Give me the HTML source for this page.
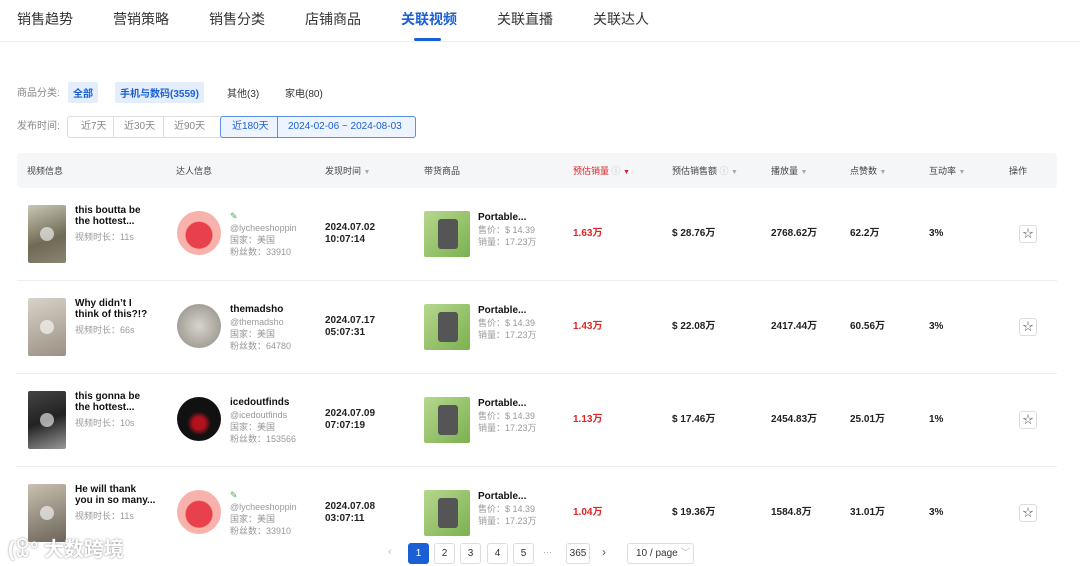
<!DOCTYPE html>
<html><head><meta charset="utf-8"><style>
*{margin:0;padding:0;box-sizing:border-box}
body{width:1080px;height:566px;overflow:hidden;background:#fff;font-family:"Liberation Sans","Noto Sans CJK SC",sans-serif;color:#222;position:relative}
.a{position:absolute;white-space:nowrap}
.tab{font-size:14px;color:#333;top:9px}
.g{color:#888}
.b{font-weight:bold}
.hd{font-size:9px;color:#444;top:165px;line-height:12px}
.tri{font-size:7px;color:#aaa}
.row{position:absolute;left:17px;width:1040px;height:93px;border-bottom:1px solid #eee}
.thumb{position:absolute;left:11px;width:38px;height:58px;border-radius:2px;background:linear-gradient(160deg,#c9c7b5,#6e6a55 60%,#8a8570)}
.ply{position:absolute;left:12px;top:22px;width:14px;height:14px;border-radius:50%;background:rgba(255,255,255,.6)}
.t1{position:absolute;left:58px;font-size:10px;font-weight:bold;line-height:11px;color:#111}
.t1 .s9{display:block;margin-top:5px;font-weight:normal}
.s9{font-size:9px;color:#999}
.av{position:absolute;left:160px;width:44px;height:44px;border-radius:50%}
.pi{position:absolute;left:407px;width:46px;height:46px;border-radius:2px;background:linear-gradient(135deg,#b6d78e,#7bb14f)}
.pi:after{content:"";position:absolute;left:14px;top:8px;width:20px;height:30px;background:#555;border-radius:3px}
.v{position:absolute;font-size:10px;font-weight:bold;line-height:12px}
.star{position:absolute;left:1002px;width:18px;height:18px;border:1px solid #ddd;border-radius:3px;font-size:11px;color:#666;text-align:center;line-height:16px}
.pg{position:absolute;top:543px;width:21px;height:21px;border:1px solid #ddd;border-radius:3px;font-size:10px;text-align:center;line-height:19px;color:#333}
.seg{position:absolute;top:121px;font-size:10px;line-height:12px;white-space:nowrap}
</style></head><body>
<div class="a tab" style="left:17px">销售趋势</div>
<div class="a tab" style="left:113px">营销策略</div>
<div class="a tab" style="left:209px">销售分类</div>
<div class="a tab" style="left:305px">店铺商品</div>
<div class="a tab b" style="left:401px;color:#1a5fd6">关联视频</div>
<div class="a tab" style="left:497px">关联直播</div>
<div class="a tab" style="left:593px">关联达人</div>
<div class="a" style="left:414px;top:38px;width:27px;height:3px;background:#1a5fd6;border-radius:2px"></div>
<div class="a" style="left:0;top:41px;width:1080px;height:1px;background:#eee"></div>

<div class="a g" style="left:17px;top:84px;font-size:10px">商品分类:</div>
<div class="a b" style="left:68px;top:82px;padding:3px 5px;background:#e3edfc;color:#1a5fd6;font-size:10px;border-radius:2px">全部</div>
<div class="a b" style="left:115px;top:82px;padding:3px 5px;background:#e3edfc;color:#1a5fd6;font-size:10px;border-radius:2px">手机与数码(3559)</div>
<div class="a" style="left:227px;top:85px;font-size:10px;color:#333">其他(3)</div>
<div class="a" style="left:285px;top:85px;font-size:10px;color:#333">家电(80)</div>

<div class="seg g" style="left:17px">发布时间:</div>
<div class="a" style="left:67px;top:116px;width:349px;height:22px;border:1px solid #ddd;border-radius:3px"></div>
<div class="seg g" style="left:81px">近7天</div>
<div class="a" style="left:113px;top:117px;width:1px;height:20px;background:#ddd"></div>
<div class="seg g" style="left:124px">近30天</div>
<div class="a" style="left:163px;top:117px;width:1px;height:20px;background:#ddd"></div>
<div class="seg g" style="left:174px">近90天</div>
<div class="a" style="left:220px;top:116px;width:196px;height:22px;border:1px solid #5b8fe6;background:#eef4fd;border-radius:3px"></div>
<div class="a" style="left:277px;top:117px;width:1px;height:20px;background:#5b8fe6"></div>
<div class="seg" style="left:232px;color:#1a5fd6">近180天</div>
<div class="seg" style="left:288px;color:#1a5fd6">2024-02-06 ~ 2024-08-03</div>

<div class="a" style="left:17px;top:153px;width:1040px;height:35px;background:#f5f6f8;border-radius:4px"></div>
<div class="a hd" style="left:27px">视频信息</div>
<div class="a hd" style="left:176px">达人信息</div>
<div class="a hd" style="left:325px">发现时间 <span class="tri">▼</span></div>
<div class="a hd" style="left:424px">带货商品</div>
<div class="a hd" style="left:573px;color:#e02424">预估销量 <span style="color:#bbb">ⓘ</span> <span class="tri" style="color:#e02424">▼</span></div>
<div class="a hd" style="left:672px">预估销售额 <span style="color:#bbb">ⓘ</span> <span class="tri">▼</span></div>
<div class="a hd" style="left:771px">播放量 <span class="tri">▼</span></div>
<div class="a hd" style="left:850px">点赞数 <span class="tri">▼</span></div>
<div class="a hd" style="left:929px">互动率 <span class="tri">▼</span></div>
<div class="a hd" style="left:1009px">操作</div>

<div class="row" style="top:188px">
 <div class="thumb" style="top:17px"><div class="ply"></div></div>
 <div class="t1" style="top:17px">this boutta be<br>the hottest...<span class="s9">视频时长：11s</span></div>
 <div class="av" style="top:23px;background:radial-gradient(circle at 50% 55%,#e8414c 0 13px,#f7b3ab 14px)"></div>
 <div class="a" style="left:213px;top:22px;font-size:9px;line-height:12px;color:#999"><span style="color:#4a4">✎</span><br>@lycheeshoppin<br>国家：美国<br>粉丝数：33910</div>
 <div class="v" style="left:308px;top:34px">2024.07.02<br>10:07:14</div>
 <div class="pi" style="top:23px"></div>
 <div class="a" style="left:461px;top:23px;font-size:9px;line-height:12px;color:#999"><b style="color:#111;font-size:10px">Portable...</b><br>售价：$ 14.39<br>销量：17.23万</div>
 <div class="v" style="left:556px;top:40px;color:#e02424">1.63万</div>
 <div class="v" style="left:655px;top:40px">$ 28.76万</div>
 <div class="v" style="left:754px;top:40px">2768.62万</div>
 <div class="v" style="left:833px;top:40px">62.2万</div>
 <div class="v" style="left:912px;top:40px">3%</div>
 <div class="star" style="top:37px">☆</div>
</div>
<div class="row" style="top:281px">
 <div class="thumb" style="top:17px;background:linear-gradient(160deg,#d8d2c8,#9b9183)"><div class="ply"></div></div>
 <div class="t1" style="top:17px">Why didn’t I<br>think of this?!?<span class="s9">视频时长：66s</span></div>
 <div class="av" style="top:23px;background:radial-gradient(circle,#d8d4cc,#8b8a80)"></div>
 <div class="a" style="left:213px;top:22px;font-size:9px;line-height:12px;color:#999"><b style="color:#111;font-size:10px">themadsho</b><br>@themadsho<br>国家：美国<br>粉丝数：64780</div>
 <div class="v" style="left:308px;top:34px">2024.07.17<br>05:07:31</div>
 <div class="pi" style="top:23px"></div>
 <div class="a" style="left:461px;top:23px;font-size:9px;line-height:12px;color:#999"><b style="color:#111;font-size:10px">Portable...</b><br>售价：$ 14.39<br>销量：17.23万</div>
 <div class="v" style="left:556px;top:40px;color:#e02424">1.43万</div>
 <div class="v" style="left:655px;top:40px">$ 22.08万</div>
 <div class="v" style="left:754px;top:40px">2417.44万</div>
 <div class="v" style="left:833px;top:40px">60.56万</div>
 <div class="v" style="left:912px;top:40px">3%</div>
 <div class="star" style="top:37px">☆</div>
</div>
<div class="row" style="top:374px">
 <div class="thumb" style="top:17px;background:linear-gradient(160deg,#444,#222 50%,#999)"><div class="ply"></div></div>
 <div class="t1" style="top:17px">this gonna be<br>the hottest...<span class="s9">视频时长：10s</span></div>
 <div class="av" style="top:23px;background:radial-gradient(circle at 50% 60%,#b1121c 0 6px,#111 12px)"></div>
 <div class="a" style="left:213px;top:22px;font-size:9px;line-height:12px;color:#999"><b style="color:#111;font-size:10px">icedoutfinds</b><br>@icedoutfinds<br>国家：美国<br>粉丝数：153566</div>
 <div class="v" style="left:308px;top:34px">2024.07.09<br>07:07:19</div>
 <div class="pi" style="top:23px"></div>
 <div class="a" style="left:461px;top:23px;font-size:9px;line-height:12px;color:#999"><b style="color:#111;font-size:10px">Portable...</b><br>售价：$ 14.39<br>销量：17.23万</div>
 <div class="v" style="left:556px;top:40px;color:#e02424">1.13万</div>
 <div class="v" style="left:655px;top:40px">$ 17.46万</div>
 <div class="v" style="left:754px;top:40px">2454.83万</div>
 <div class="v" style="left:833px;top:40px">25.01万</div>
 <div class="v" style="left:912px;top:40px">1%</div>
 <div class="star" style="top:37px">☆</div>
</div>
<div class="row" style="top:467px;border:none">
 <div class="thumb" style="top:17px;background:linear-gradient(160deg,#c8c0b0,#6b6458)"><div class="ply"></div></div>
 <div class="t1" style="top:17px">He will thank<br>you in so many...<span class="s9">视频时长：11s</span></div>
 <div class="av" style="top:23px;background:radial-gradient(circle at 50% 55%,#e8414c 0 13px,#f7b3ab 14px)"></div>
 <div class="a" style="left:213px;top:22px;font-size:9px;line-height:12px;color:#999"><span style="color:#4a4">✎</span><br>@lycheeshoppin<br>国家：美国<br>粉丝数：33910</div>
 <div class="v" style="left:308px;top:34px">2024.07.08<br>03:07:11</div>
 <div class="pi" style="top:23px"></div>
 <div class="a" style="left:461px;top:23px;font-size:9px;line-height:12px;color:#999"><b style="color:#111;font-size:10px">Portable...</b><br>售价：$ 14.39<br>销量：17.23万</div>
 <div class="v" style="left:556px;top:40px;color:#e02424">1.04万</div>
 <div class="v" style="left:655px;top:40px">$ 19.36万</div>
 <div class="v" style="left:754px;top:40px">1584.8万</div>
 <div class="v" style="left:833px;top:40px">31.01万</div>
 <div class="v" style="left:912px;top:40px">3%</div>
 <div class="star" style="top:37px">☆</div>
</div>

<div class="a" style="left:8px;top:533px;font-size:20px;font-weight:bold;color:#fff;text-shadow:0 0 2px #888">(ꀾ° 大数跨境</div>

<div class="a" style="left:388px;top:546px;font-size:11px;color:#bbb">‹</div>
<div class="pg" style="left:408px;background:#1a5fd6;border-color:#1a5fd6;color:#fff">1</div>
<div class="pg" style="left:434px">2</div>
<div class="pg" style="left:460px">3</div>
<div class="pg" style="left:487px">4</div>
<div class="pg" style="left:513px">5</div>
<div class="a" style="left:543px;top:547px;font-size:9px;color:#aaa">···</div>
<div class="pg" style="left:566px;width:24px">365</div>
<div class="a" style="left:602px;top:545px;font-size:12px;color:#555">›</div>
<div class="pg" style="left:627px;width:67px;text-align:left;padding-left:8px">10 / page <span style="color:#bbb">﹀</span></div>
</body></html>
